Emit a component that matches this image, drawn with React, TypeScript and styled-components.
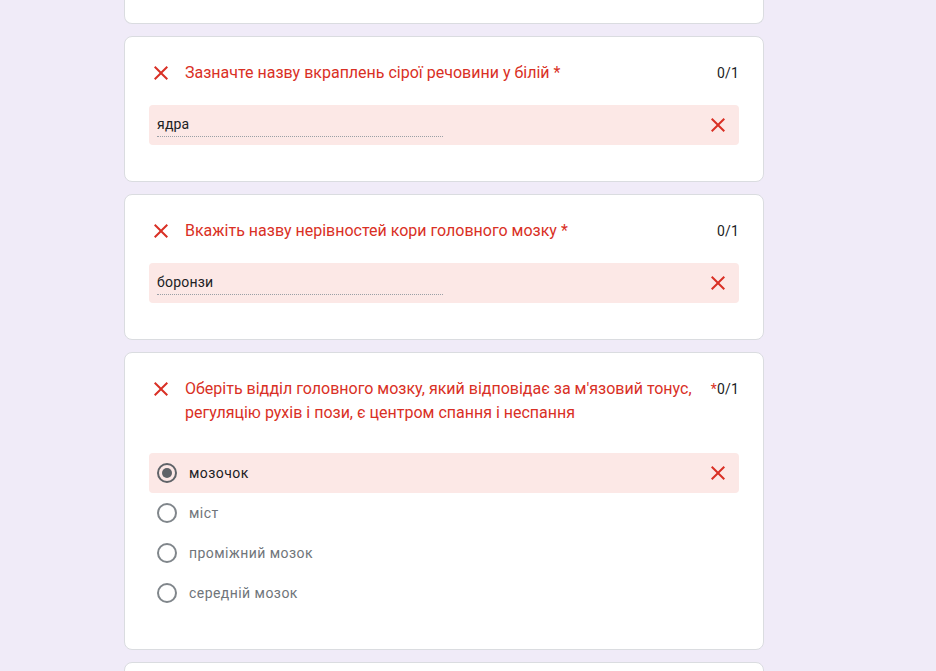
import React from 'react';
import styled, { createGlobalStyle } from 'styled-components';

const GlobalStyle = createGlobalStyle`
  html, body {
    margin: 0;
    padding: 0;
    background-color: #f0ebf8;
    overflow: hidden;
  }
  body {
    font-family: Roboto, 'Noto Sans', Arial, sans-serif;
  }
`;

const Page = styled.div`
  padding-left: 124px;
  height: 671px;
  overflow: hidden;
`;

const Column = styled.div`
  width: 640px;
  display: flex;
  flex-direction: column;
  gap: 12px;
`;

const Card = styled.div<{ $clipped?: boolean; $stub?: boolean }>`
  box-sizing: border-box;
  background: #fff;
  border: 1px solid #dadce0;
  border-radius: 8px;
  padding: 24px 24px 36px 24px;
  ${(p) =>
    p.$clipped &&
    `
    border-top: none;
    border-top-left-radius: 0;
    border-top-right-radius: 0;
    height: 24px;
    padding: 0;
  `}
  ${(p) =>
    p.$stub &&
    `
    height: 40px;
    padding: 0;
  `}
`;

const Header = styled.div`
  display: flex;
  align-items: flex-start;
`;

const MarkSlot = styled.div`
  width: 24px;
  height: 24px;
  flex: none;
  margin-right: 12px;
  display: flex;
  align-items: center;
  justify-content: center;
`;

const Title = styled.div`
  flex: 1;
  color: #d93025;
  font-size: 16px;
  line-height: 24px;
  padding-right: 16px;
`;

const Asterisk = styled.span`
  color: #d93025;
`;

const Points = styled.div`
  flex: none;
  color: #202124;
  font-size: 14px;
  line-height: 24px;
  letter-spacing: 0.2px;
`;

const AnswerBox = styled.div`
  margin-top: 20px;
  height: 40px;
  background: #fce8e6;
  border-radius: 4px;
  display: flex;
  align-items: center;
  justify-content: space-between;
  padding: 0 9px 0 8px;
`;

const AnswerText = styled.div`
  width: 286px;
  height: 24px;
  box-sizing: border-box;
  color: #202124;
  font-size: 14px;
  line-height: 21px;
  letter-spacing: 0.2px;
  border-bottom: 1px dotted #9aa0a6;
  padding-top: 1px;
`;

const OptionList = styled.div`
  margin-top: 28px;
  display: flex;
  flex-direction: column;
`;

const OptionRow = styled.div<{ $wrong?: boolean }>`
  height: 40px;
  display: flex;
  align-items: center;
  padding: 0 9px 0 8px;
  border-radius: 4px;
  background: ${(p) => (p.$wrong ? '#fce8e6' : 'transparent')};
`;

const Radio = styled.span<{ $checked?: boolean }>`
  box-sizing: border-box;
  width: 20px;
  height: 20px;
  flex: none;
  border-radius: 50%;
  border: 2px solid ${(p) => (p.$checked ? '#5f6368' : '#80868b')};
  display: flex;
  align-items: center;
  justify-content: center;
  margin-right: 12px;
  &::after {
    content: '';
    width: 10px;
    height: 10px;
    border-radius: 50%;
    background: #5f6368;
    display: ${(p) => (p.$checked ? 'block' : 'none')};
  }
`;

const OptionLabel = styled.span<{ $checked?: boolean }>`
  flex: 1;
  font-size: 14px;
  letter-spacing: 0.45px;
  color: ${(p) => (p.$checked ? '#202124' : '#70757a')};
`;

const CrossIcon: React.FC = () => (
  <svg width="24" height="24" viewBox="0 0 24 24" fill="#d93025">
    <path d="M19 6.41L17.59 5 12 10.59 6.41 5 5 6.41 10.59 12 5 17.59 6.41 19 12 13.41 17.59 19 19 17.59 13.41 12z" />
  </svg>
);

interface TextQuestionProps {
  title: string;
  answer: string;
}

const TextQuestion: React.FC<TextQuestionProps> = ({ title, answer }) => (
  <Card>
    <Header>
      <MarkSlot>
        <CrossIcon />
      </MarkSlot>
      <Title>
        {title} <Asterisk>*</Asterisk>
      </Title>
      <Points>0/1</Points>
    </Header>
    <AnswerBox>
      <AnswerText>{answer}</AnswerText>
      <CrossIcon />
    </AnswerBox>
  </Card>
);

const options = ['мозочок', 'міст', 'проміжний мозок', 'середній мозок'];
const chosen = 'мозочок';

const App: React.FC = () => (
  <Page>
    <GlobalStyle />
    <Column>
      <Card $clipped />
      <TextQuestion title="Зазначте назву вкраплень сірої речовини у білій" answer="ядра" />
      <TextQuestion title="Вкажіть назву нерівностей кори головного мозку" answer="боронзи" />
      <Card>
        <Header>
          <MarkSlot>
            <CrossIcon />
          </MarkSlot>
          <Title>
            Оберіть відділ головного мозку, який відповідає за м'язовий тонус, регуляцію рухів і пози,
            є центром спання і неспання
          </Title>
          <Points>
            <Asterisk>*</Asterisk>0/1
          </Points>
        </Header>
        <OptionList>
          {options.map((opt) => {
            const checked = opt === chosen;
            return (
              <OptionRow key={opt} $wrong={checked}>
                <Radio $checked={checked} />
                <OptionLabel $checked={checked}>{opt}</OptionLabel>
                {checked && <CrossIcon />}
              </OptionRow>
            );
          })}
        </OptionList>
      </Card>
      <Card $stub />
    </Column>
  </Page>
);

export default App;
